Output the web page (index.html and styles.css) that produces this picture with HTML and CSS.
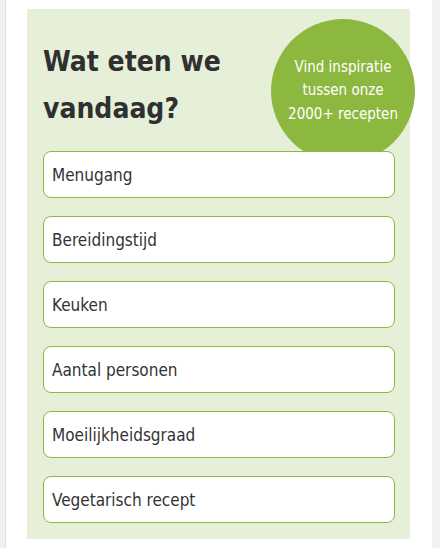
FILE: index.html
```html
<!DOCTYPE html>
<html lang="nl">
<head>
<meta charset="utf-8">
<title>Wat eten we vandaag?</title>
<link rel="stylesheet" href="styles.css">
</head>
<body>
<div class="page">
  <section class="panel">
    <div class="panel-head">
      <h2 class="title">Wat eten we vandaag?</h2>
      <div class="badge">Vind inspiratie tussen onze 2000+ recepten</div>
    </div>
    <div class="filters">
      <div class="filter">Menugang</div>
      <div class="filter">Bereidingstijd</div>
      <div class="filter">Keuken</div>
      <div class="filter">Aantal personen</div>
      <div class="filter">Moeilijkheidsgraad</div>
      <div class="filter">Vegetarisch recept</div>
    </div>
  </section>
</div>
</body>
</html>
```

FILE: styles.css
```css
html, body {
  margin: 0;
  padding: 0;
}
body {
  background: #f1f2f4;
  font-family: "DejaVu Sans", Verdana, sans-serif;
  font-stretch: condensed;
  color: #333333;
  height: 548px;
  overflow: hidden;
}
.page {
  margin-left: 5px;
  width: 427px;
  border-left: 1px solid #dedfe1;
  background: #ffffff;
  padding: 9px 22px 9px 21px;
  box-sizing: border-box;
  min-height: 548px;
}
.panel {
  background: #e6f0d8;
  padding: 10px 15px 16px 16px;
}
.panel-head {
  display: flex;
  align-items: flex-start;
}
.title {
  flex: 1;
  margin: 0;
  padding-top: 19px;
  font-size: 28px;
  line-height: 47px;
  font-weight: bold;
  color: #303030;
}
.badge {
  flex: none;
  width: 144px;
  height: 144px;
  border-radius: 50%;
  background: #8db840;
  color: #ffffff;
  font-size: 15px;
  line-height: 23.5px;
  text-align: center;
  display: flex;
  align-items: center;
  justify-content: center;
  padding: 0 14px;
  box-sizing: border-box;
  margin-right: -20px;
  margin-bottom: -12px;
}
.filters {
  position: relative;
  z-index: 1;
  display: flex;
  flex-direction: column;
  gap: 18px;
}
.filter {
  height: 47px;
  box-sizing: border-box;
  border: 1px solid #8db840;
  border-radius: 8px;
  background: #ffffff;
  padding: 0 8px;
  display: flex;
  align-items: center;
  font-size: 17px;
  color: #333333;
}
```
